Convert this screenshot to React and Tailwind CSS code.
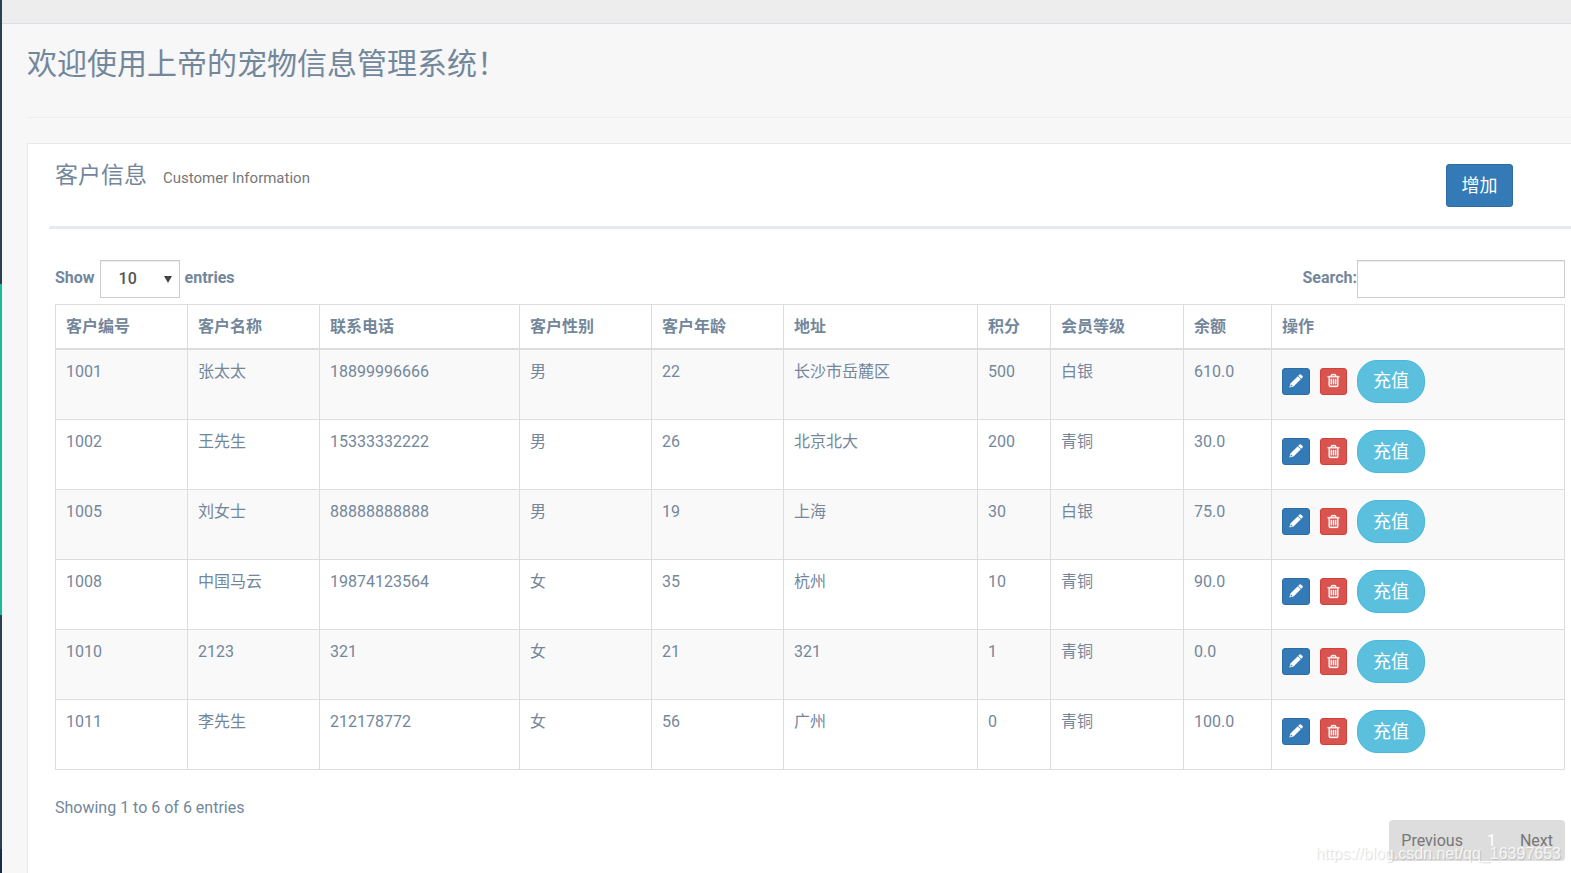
import React, { useState } from 'react';

const COLUMNS = [
  { key: 'id', label: '客户编号', width: 'w-[132px]' },
  { key: 'name', label: '客户名称', width: 'w-[132px]' },
  { key: 'phone', label: '联系电话', width: 'w-[200px]' },
  { key: 'gender', label: '客户性别', width: 'w-[132px]' },
  { key: 'age', label: '客户年龄', width: 'w-[132px]' },
  { key: 'address', label: '地址', width: 'w-[194px]' },
  { key: 'points', label: '积分', width: 'w-[73px]' },
  { key: 'level', label: '会员等级', width: 'w-[133px]' },
  { key: 'balance', label: '余额', width: 'w-[88px]' },
];

const CUSTOMERS = [
  { id: '1001', name: '张太太', phone: '18899996666', gender: '男', age: '22', address: '长沙市岳麓区', points: '500', level: '白银', balance: '610.0' },
  { id: '1002', name: '王先生', phone: '15333332222', gender: '男', age: '26', address: '北京北大', points: '200', level: '青铜', balance: '30.0' },
  { id: '1005', name: '刘女士', phone: '88888888888', gender: '男', age: '19', address: '上海', points: '30', level: '白银', balance: '75.0' },
  { id: '1008', name: '中国马云', phone: '19874123564', gender: '女', age: '35', address: '杭州', points: '10', level: '青铜', balance: '90.0' },
  { id: '1010', name: '2123', phone: '321', gender: '女', age: '21', address: '321', points: '1', level: '青铜', balance: '0.0' },
  { id: '1011', name: '李先生', phone: '212178772', gender: '女', age: '56', address: '广州', points: '0', level: '青铜', balance: '100.0' },
];

function PencilIcon() {
  return (
    <svg viewBox="0 0 14 14" className="size-3.5" fill="currentColor" aria-hidden="true">
      <path fillRule="evenodd" d="M0.4 13.6L1.4 9.4 8.8 2.2 11.8 5.2 4.5 12.5zM2 10.4L1.4 12.6 3.6 12z" />
      <path d="M9.2 1.8l1.3-1.3q.7-.6 1.4 0l1.6 1.6q.6.7 0 1.4l-1.3 1.3z" />
    </svg>
  );
}

function TrashIcon() {
  return (
    <svg viewBox="0 0 1792 1792" className="size-[15px]" fill="currentColor" stroke="currentColor" strokeWidth="40" aria-hidden="true">
      <path d="M704 736v576q0 14-9 23t-23 9h-64q-14 0-23-9t-9-23v-576q0-14 9-23t23-9h64q14 0 23 9t9 23zm256 0v576q0 14-9 23t-23 9h-64q-14 0-23-9t-9-23v-576q0-14 9-23t23-9h64q14 0 23 9t9 23zm256 0v576q0 14-9 23t-23 9h-64q-14 0-23-9t-9-23v-576q0-14 9-23t23-9h64q14 0 23 9t9 23zm128 724v-948h-896v948q0 22 7 40.5t14.5 27 10.5 8.5h832q3 0 10.5-8.5t14.5-27 7-40.5zm-672-1076h448l-48-117q-7-9-17-11h-317q-10 2-17 11zm928 32v64q0 14-9 23t-23 9h-96v948q0 83-47 143.5t-113 60.5h-832q-66 0-113-58.5t-47-141.5v-952h-96q-14 0-23-9t-9-23v-64q0-14 9-23t23-9h309l70-167q15-37 54-63t79-26h320q40 0 79 26t54 63l70 167h309q14 0 23 9t9 23z" />
    </svg>
  );
}

function RowActions() {
  return (
    <div className="flex items-center">
      <button aria-label="编辑" className="flex h-[27px] w-7 items-center justify-center rounded-[3px] border border-[#2e6da4] bg-[#337ab7] pb-px text-white">
        <PencilIcon />
      </button>
      <button aria-label="删除" className="ml-2.5 flex size-[27px] items-center justify-center rounded-[3px] border border-[#d43f3a] bg-[#d9534f] pb-px text-white">
        <TrashIcon />
      </button>
      <button className="ml-2.5 h-[43px] w-[68px] rounded-[20px] border border-[#46b8da] bg-[#5bc0de] text-lg text-white">
        充值
      </button>
    </div>
  );
}

function CustomerTable({ rows }) {
  return (
    <table className="w-full table-fixed border-collapse border border-[#ddd] text-left text-base">
      <colgroup>
        {COLUMNS.map((c) => <col key={c.key} className={c.width} />)}
        <col />
      </colgroup>
      <thead>
        <tr className="h-11">
          {COLUMNS.map((c) => (
            <th key={c.key} className="border border-b-2 border-[#ddd] px-2.5 pt-0.5 font-bold">{c.label}</th>
          ))}
          <th className="border border-b-2 border-[#ddd] px-2.5 pt-0.5 font-bold">操作</th>
        </tr>
      </thead>
      <tbody>
        {rows.map((row) => (
          <tr key={row.id} className="h-[70px] align-top odd:bg-[#f9f9f9] first:h-[71px]">
            {COLUMNS.map((c) => (
              <td key={c.key} className="border border-[#ddd] px-2.5 py-2.5">{row[c.key]}</td>
            ))}
            <td className="border border-[#ddd] px-2.5 py-2.5">
              <RowActions />
            </td>
          </tr>
        ))}
      </tbody>
    </table>
  );
}

export default function App() {
  const [query, setQuery] = useState('');
  const rows = CUSTOMERS.filter((c) => Object.values(c).some((v) => v.includes(query)));

  return (
    <div className="relative flex min-h-screen bg-[#f7f7f7] font-[Roboto,'Noto_Sans_CJK_SC',sans-serif] text-[#73879c]">
      {/* Sidebar edge */}
      <aside className="flex w-0.5 flex-col bg-[#2a3f54]">
        <div className="h-[284px]" />
        <div className="h-[331px] bg-[#1abb9c]" />
        <div className="flex-1" />
        <div className="h-6 bg-[#172d44]" />
      </aside>

      <div className="flex min-w-0 flex-1 flex-col">
        <div className="h-6 border-b border-[#d9dee4] bg-[#ededed]" />

        <main className="flex flex-1 flex-col pl-[25px]">
          <h1 className="border-b border-[#eee] pt-[19px] pb-8 text-3xl leading-[42px] font-normal">
            欢迎使用上帝的宠物信息管理系统！
          </h1>

          <section className="mt-[25px] flex-1 border-t border-l border-[#e6e9ed] bg-white pr-1.5 pl-[21px]">
            <div className="-mr-1.5 flex items-start justify-between border-b-3 border-[#e6e9ed] pt-5 pr-[58px] pb-[19px] pl-1.5">
              <h2 className="flex items-baseline gap-4 text-[23px] leading-6 font-normal">
                客户信息
                <small className="text-[15px] font-normal text-[#777]">Customer Information</small>
              </h2>
              <button className="h-[43px] w-[67px] rounded-[3px] border border-[#2e6da4] bg-[#337ab7] text-lg text-white">
                增加
              </button>
            </div>

            <div className="pl-1.5">
              <div className="mt-[31px] mb-1.5 flex justify-between text-base font-bold">
                <div className="flex items-center gap-[5px]">
                  <label htmlFor="length" className="pb-0.5">Show</label>
                  <span className="relative flex">
                    <select
                      id="length"
                      className="h-[38px] w-20 appearance-none border border-[#ccc] bg-white pl-[18px] font-medium text-[#555] shadow-[inset_0_1px_1px_rgba(0,0,0,0.075)]"
                    >
                      <option>10</option>
                      <option>25</option>
                      <option>50</option>
                      <option>100</option>
                    </select>
                    <svg viewBox="0 0 8 7" className="pointer-events-none absolute top-4 right-2 h-[7px] w-2" fill="#444" aria-hidden="true">
                      <path d="M0 0h8L4 7z" />
                    </svg>
                  </span>
                  <label htmlFor="length" className="pb-0.5">entries</label>
                </div>

                <div className="flex items-center">
                  <label htmlFor="search" className="pb-0.5">Search:</label>
                  <input
                    id="search"
                    type="search"
                    value={query}
                    onChange={(e) => setQuery(e.target.value)}
                    className="h-[38px] w-52 border border-[#ccc] bg-white px-3 font-normal text-[#555] shadow-[inset_0_1px_1px_rgba(0,0,0,0.075)]"
                  />
                </div>
              </div>

              <CustomerTable rows={rows} />

              <p className="mt-[26px] text-base">Showing 1 to 6 of 6 entries</p>
              <nav className="flex justify-end">
                <div className="flex h-[41px] items-center rounded bg-[#ddd] px-3 text-base text-[#777]">
                  <a href="#previous">Previous</a>
                  <a href="#page-1" className="mx-6 text-white">1</a>
                  <a href="#next">Next</a>
                </div>
              </nav>
            </div>
          </section>
        </main>
      </div>

      <span className="pointer-events-none absolute right-2.5 bottom-[7px] font-['Liberation_Sans',sans-serif] text-base text-white/80 [text-shadow:1px_1px_1px_rgba(0,0,0,0.15)]">
        https://blog.csdn.net/qq_16397653
      </span>
    </div>
  );
}
